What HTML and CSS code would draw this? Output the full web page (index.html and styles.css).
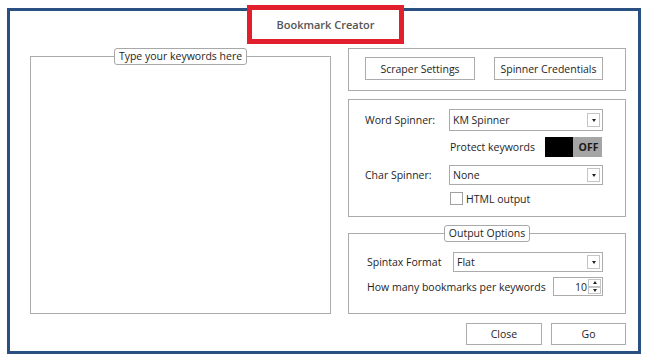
FILE: index.html
```html
<!DOCTYPE html>
<html>
<head>
<meta charset="utf-8">
<link rel="stylesheet" href="styles.css">
</head>
<body>
<div class="frame">
  <div class="title">Bookmark Creator</div>
  <div class="layout">
    <fieldset class="keywords">
      <legend class="legend">Type your keywords here</legend>
    </fieldset>
    <div class="side">
      <div class="box top-box">
        <div class="btn btn-scraper">Scraper Settings</div>
        <div class="btn btn-cred">Spinner Credentials</div>
      </div>
      <div class="box spin-box">
        <div class="row row-word">
          <span class="label">Word Spinner:</span>
          <div class="select sel-word"><span>KM Spinner</span><span class="arrow"><i></i></span></div>
        </div>
        <div class="row row-protect">
          <span class="label"></span>
          <div class="protect">
            <span>Protect keywords</span>
            <div class="toggle"><span class="t-on"></span><span class="t-off">OFF</span></div>
          </div>
        </div>
        <div class="row row-char">
          <span class="label">Char Spinner:</span>
          <div class="select sel-char"><span>None</span><span class="arrow"><i></i></span></div>
        </div>
        <div class="row row-check">
          <span class="label"></span>
          <span class="check"></span><span class="check-label">HTML output</span>
        </div>
      </div>
      <fieldset class="output">
        <legend class="legend">Output Options</legend>
        <div class="output-body">
          <div class="orow orow-format">
            <span class="olabel">Spintax Format</span>
            <div class="select sel-flat"><span>Flat</span><span class="arrow"><i></i></span></div>
          </div>
          <div class="orow orow-count">
            <span class="olabel">How many bookmarks per keywords</span>
            <div class="num"><span class="num-val">10</span><span class="spin"><span class="up"><i></i></span><span class="down"><i></i></span></span></div>
          </div>
        </div>
      </fieldset>
      <div class="actions">
        <div class="btn btn-close">Close</div>
        <div class="btn btn-go">Go</div>
      </div>
    </div>
  </div>
</div>
</body>
</html>
```

FILE: styles.css
```css
* { box-sizing: border-box; }
html, body { margin: 0; padding: 0; background: #fff; }
body {
  font-family: "Open Sans", "Noto Sans", sans-serif;
  font-size: 10.5px;
  color: #1e1e1e;
}
.frame {
  position: relative;
  margin: 8px 0 0 7px;
  width: 634px;
  height: 346px;
  border: 3px solid #2a4f81;
  padding: 37px 12px 6px 20px;
}
.title {
  position: absolute;
  left: 237px;
  top: -6px;
  width: 157px;
  height: 39px;
  border: 5px solid #e21f2d;
  background: #fff;
  display: flex;
  align-items: center;
  justify-content: center;
  font-weight: 600;
  font-size: 11px;
  color: #555;
}
.layout {
  display: grid;
  grid-template-columns: 301px 278px;
  column-gap: 17px;
  align-items: start;
}
fieldset {
  margin: 0;
  padding: 0;
  border: 1px solid #ababab;
  min-inline-size: 0;
}
.legend {
  margin: 0 auto;
  padding: 0 4px;
  height: 17px;
  line-height: 15px;
  border: 1px solid #a8a8a8;
  border-radius: 3px;
  background: #fff;
  white-space: nowrap;
}
.keywords {
  height: 266px;
}
.side {
  display: flex;
  flex-direction: column;
}
.box {
  border: 1px solid #ababab;
}
.btn {
  border: 1px solid #ababab;
  background: #fff;
  display: flex;
  align-items: center;
  justify-content: center;
  height: 23px;
}
.top-box {
  height: 43px;
  display: flex;
  padding: 8px 0 0 16px;
  gap: 19px;
}
.btn-scraper { width: 110px; }
.btn-cred { width: 109px; }
.spin-box {
  margin-top: 8px;
  height: 118px;
  padding: 9px 0 0 16px;
}
.row {
  display: flex;
  align-items: center;
}
.label { width: 84px; flex: none; }
.row-word { height: 22px; }
.row-protect { height: 20px; margin-top: 6px; }
.row-char { height: 20px; margin-top: 8px; }
.row-check { height: 13px; margin-top: 7px; }
.select {
  border: 1px solid #ababab;
  background: #fff;
  display: flex;
  align-items: center;
  justify-content: space-between;
  padding-left: 3px;
  padding-right: 2px;
  height: 100%;
}
.sel-word, .sel-char { width: 154px; }
.arrow {
  width: 13px;
  height: 14px;
  border: 1px solid #c4c4c4;
  display: flex;
  align-items: center;
  justify-content: center;
}
.arrow i, .spin i {
  display: block;
  width: 0;
  height: 0;
  border-left: 2.5px solid transparent;
  border-right: 2.5px solid transparent;
  border-top: 3px solid #222;
}
.protect {
  width: 153px;
  display: flex;
  align-items: center;
  justify-content: space-between;
  padding-left: 1px;
  height: 100%;
}
.toggle {
  display: flex;
  width: 57px;
  height: 20px;
}
.t-on { width: 28px; background: #000; }
.t-off {
  width: 29px;
  background: #a5a5a5;
  font-weight: 700;
  color: #1a1a1a;
  display: flex;
  align-items: center;
  justify-content: center;
  padding-left: 2px;
}
.check {
  width: 13px;
  height: 13px;
  border: 1px solid #a0a0a0;
  margin-left: 1px;
  background: #fff;
}
.check-label { margin-left: 3px; }
.output {
  margin-top: 8px;
  height: 89px;
}
.output-body {
  padding: 10px 0 0 18px;
}
.orow { display: flex; align-items: center; }
.orow-format { height: 20px; }
.olabel { flex: none; }
.orow-format .olabel { width: 86px; }
.sel-flat { width: 150px; }
.orow-count { height: 19px; margin-top: 5px; }
.orow-count .olabel { width: 186px; }
.num {
  width: 50px;
  height: 19px;
  border: 1px solid #ababab;
  display: flex;
  align-items: stretch;
  justify-content: flex-end;
}
.num-val {
  display: flex;
  align-items: center;
  padding-right: 1px;
}
.spin {
  width: 14px;
  display: flex;
  flex-direction: column;
  padding: 1px 1px 1px 0;
}
.spin span {
  flex: 1;
  border: 1px solid #c4c4c4;
  display: flex;
  align-items: center;
  justify-content: center;
}
.spin .up i {
  border-top: 0;
  border-bottom: 3px solid #222;
}
.actions {
  display: flex;
  justify-content: flex-end;
  gap: 9px;
  margin-top: 9px;
}
.btn-close { width: 76px; height: 22px; }
.btn-go { width: 75px; height: 22px; }
```
